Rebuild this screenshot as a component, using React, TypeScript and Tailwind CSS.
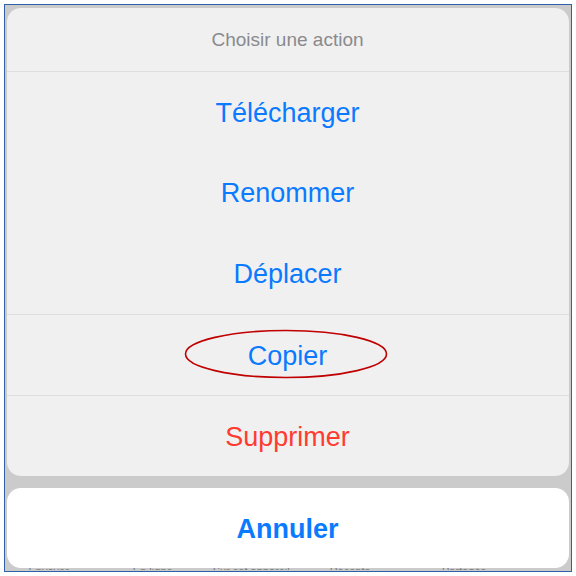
import React from "react";

const font = { fontFamily: '"Liberation Sans", Arial, sans-serif' };

function Row({ label, color, divider = false }: { label: string; color: string; divider?: boolean }) {
  return (
    <div
      className={`h-[81px] flex items-center justify-center pt-[2px] text-[27px] ${color} ${divider ? "border-t border-[#dedede]" : ""}`}
    >
      {label}
    </div>
  );
}

export default function App() {
  return (
    <div className="w-[576px] h-[576px] bg-white p-[4px]" style={font}>
      <div className="h-full w-full border-[1.5px] border-[#2d62ab] bg-[#cbcbcb] flex flex-col pl-[1.5px] pr-[2.5px] pt-[3px] overflow-hidden">
        <div className="rounded-[14px] bg-[#f0f0f0] flex flex-col overflow-hidden shrink-0">
          <div className="h-[63px] flex items-center justify-center pt-[2px] text-[19px] text-[#8a8a8e]">
            Choisir une action
          </div>
          <Row label="Télécharger" color="text-[#0a7aff]" divider />
          <Row label="Renommer" color="text-[#0a7aff]" />
          <Row label="Déplacer" color="text-[#0a7aff]" />
          <div className="relative">
            <Row label="Copier" color="text-[#0a7aff]" divider />
            <svg
              className="absolute left-[177px] top-[15px]"
              width="204"
              height="50"
              viewBox="0 0 204 50"
            >
              <ellipse cx="102" cy="25" rx="100.5" ry="23.5" fill="none" stroke="#c00000" strokeWidth="1.6" />
            </svg>
          </div>
          <Row label="Supprimer" color="text-[#ff3b30]" divider />
        </div>
        <div className="mt-[12px] h-[80px] shrink-0 rounded-[14px] bg-white flex items-center justify-center pt-[2px] text-[27px] font-bold text-[#0a7aff]">
          Annuler
        </div>
        <div className="h-[2px] shrink-0 overflow-hidden">
          <div className="-mt-[2px] flex text-[11px] leading-[11px] text-[#7a7a7a]">
            <span className="ml-[22px]">Envoyer</span>
            <span className="ml-[64px]">En ligne</span>
            <span className="ml-[40px]">Sur cet appareil</span>
            <span className="ml-[40px]">Récents</span>
            <span className="ml-[72px]">Partagés</span>
          </div>
        </div>
      </div>
    </div>
  );
}
